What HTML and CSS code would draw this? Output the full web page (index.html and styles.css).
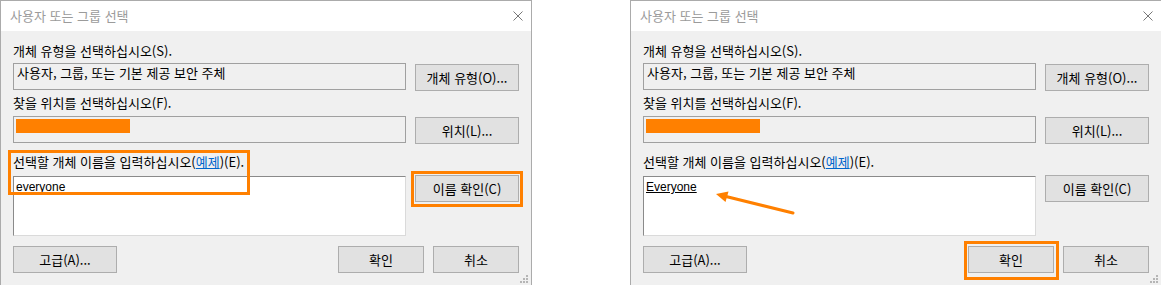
FILE: index.html
```html
<!DOCTYPE html>
<html lang="ko">
<head>
<meta charset="utf-8">
<title>사용자 또는 그룹 선택</title>
<link rel="stylesheet" href="styles.css">
</head>
<body>
<div class="stage">
  <section class="dlg">
    <header class="titlebar">
      <span class="title">사용자 또는 그룹 선택</span>
      <svg class="close" viewBox="0 0 10 10" width="10" height="10"><path d="M0.5 0.5L9.5 9.5M9.5 0.5L0.5 9.5" stroke="#777" stroke-width="1" fill="none"/></svg>
    </header>
    <div class="content">
      <div class="label l1">개체 유형을 선택하십시오(S).</div>
      <div class="row r1">
        <div class="field"><span class="ftext">사용자, 그룹, 또는 기본 제공 보안 주체</span></div>
        <div class="btn">개체 유형(O)...</div>
      </div>
      <div class="label l2">찾을 위치를 선택하십시오(F).</div>
      <div class="row r2">
        <div class="field"><div class="redact"></div></div>
        <div class="btn">위치(L)...</div>
      </div>
      <div class="label l3">선택할 개체 이름을 입력하십시오(<span class="link">예제</span>)(E).</div>
      <div class="row r3">
        <div class="listbox"><span class="typed">everyone</span></div>
        <div class="btn">이름 확인(C)</div>
      </div>
      <div class="row r4">
        <div class="btn">고급(A)...</div>
        <div class="spacer"></div>
        <div class="btn small">확인</div>
        <div class="btn small">취소</div>
      </div>
    </div>
    <svg class="grip" viewBox="0 0 8 8" width="8" height="8"><g fill="#b5b5b5"><rect x="6" y="0" width="2" height="2"/><rect x="3" y="3" width="2" height="2"/><rect x="6" y="3" width="2" height="2"/><rect x="0" y="6" width="2" height="2"/><rect x="3" y="6" width="2" height="2"/><rect x="6" y="6" width="2" height="2"/></g></svg>
    <div class="mark mark-entry"></div>
    <div class="mark mark-check"></div>
  </section>

  <section class="dlg">
    <header class="titlebar">
      <span class="title">사용자 또는 그룹 선택</span>
      <svg class="close" viewBox="0 0 10 10" width="10" height="10"><path d="M0.5 0.5L9.5 9.5M9.5 0.5L0.5 9.5" stroke="#777" stroke-width="1" fill="none"/></svg>
    </header>
    <div class="content">
      <div class="label l1">개체 유형을 선택하십시오(S).</div>
      <div class="row r1">
        <div class="field"><span class="ftext">사용자, 그룹, 또는 기본 제공 보안 주체</span></div>
        <div class="btn">개체 유형(O)...</div>
      </div>
      <div class="label l2">찾을 위치를 선택하십시오(F).</div>
      <div class="row r2">
        <div class="field"><div class="redact"></div></div>
        <div class="btn">위치(L)...</div>
      </div>
      <div class="label l3">선택할 개체 이름을 입력하십시오(<span class="link">예제</span>)(E).</div>
      <div class="row r3">
        <div class="listbox"><span class="typed resolved">Everyone</span></div>
        <div class="btn">이름 확인(C)</div>
      </div>
      <div class="row r4">
        <div class="btn">고급(A)...</div>
        <div class="spacer"></div>
        <div class="btn small">확인</div>
        <div class="btn small">취소</div>
      </div>
    </div>
    <svg class="grip" viewBox="0 0 8 8" width="8" height="8"><g fill="#b5b5b5"><rect x="6" y="0" width="2" height="2"/><rect x="3" y="3" width="2" height="2"/><rect x="6" y="3" width="2" height="2"/><rect x="0" y="6" width="2" height="2"/><rect x="3" y="6" width="2" height="2"/><rect x="6" y="6" width="2" height="2"/></g></svg>
    <svg class="arrow" viewBox="0 0 90 30" width="90" height="30"><line x1="87" y1="27" x2="20" y2="10.5" stroke="#ff8000" stroke-width="3" stroke-linecap="round"/><polygon points="10,8 22.5,5.5 19.5,16" fill="#ff8000"/></svg>
    <div class="mark mark-ok"></div>
  </section>
</div>
</body>
</html>
```

FILE: styles.css
```css
* { box-sizing: border-box; }

html, body {
  margin: 0;
  padding: 0;
  background: #ffffff;
}

body {
  font-family: "Noto Sans CJK KR", "Noto Sans", sans-serif;
  font-size: 13px;
  color: #000000;
}

.stage {
  display: flex;
  gap: 98px;
  width: 1161px;
  height: 285px;
  overflow: hidden;
}

.dlg {
  position: relative;
  flex: 0 0 532px;
  height: 285px;
  border: 1px solid #ababab;
  border-bottom: 0;
  background: #f0f0f0;
  display: flex;
  flex-direction: column;
}

.titlebar {
  height: 30px;
  background: #ffffff;
  display: flex;
  align-items: center;
  justify-content: space-between;
  padding: 0 8px 0 9px;
}

.title {
  color: #9b9b9b;
  line-height: 16px;
}

.close { display: block; }

.content {
  padding: 12px 12px 0 12px;
  display: flex;
  flex-direction: column;
}

.label {
  height: 16px;
  line-height: 16px;
  white-space: nowrap;
}

.l2 { margin-top: 4px; }
.l3 { margin-top: 10px; }

.row {
  display: flex;
  gap: 9px;
  align-items: flex-start;
}

.r1 { margin-top: 4px; }
.r2 { margin-top: 5px; }
.r3 { margin-top: 5px; }
.r4 { margin-top: 10px; gap: 0; }

.field {
  flex: 1;
  height: 27px;
  border: 1px solid #a0a0a0;
  background: #f0f0f0;
  padding: 0 3px;
  line-height: 16px;
  white-space: nowrap;
}

.ftext { display: block; padding-top: 1px; }

.redact {
  width: 114px;
  height: 14px;
  margin: 2px 0 0 -1px;
  background: #ff8000;
}

.btn {
  flex: 0 0 104px;
  height: 27px;
  margin-top: 1px;
  border: 1px solid #adadad;
  background: #e1e1e1;
  display: flex;
  align-items: center;
  justify-content: center;
  line-height: 16px;
  white-space: nowrap;
}

.r3 .btn { margin-top: 0; }
.r4 .btn { margin-top: 0; }

.btn.small { flex: 0 0 86px; }
.btn.small + .btn.small { margin-left: 9px; }

.spacer { flex: 1; }

.listbox {
  flex: 1;
  height: 60px;
  margin-top: 1px;
  background: #ffffff;
  border: 1px solid;
  border-color: #8a8a8a #dadada #dadada #8a8a8a;
  padding: 2px 2px;
  line-height: 16px;
}

.typed {
  display: block;
  font-family: "Liberation Sans", Arial, sans-serif;
  font-size: 12px;
}

.resolved { text-decoration: underline; }

.link {
  color: #0066cc;
  text-decoration: underline;
}

.grip {
  position: absolute;
  right: 3px;
  bottom: 2px;
}

.mark {
  position: absolute;
  border: 3px solid #ff8000;
}

.mark-entry { left: 7px; top: 149px; width: 242px; height: 45px; }
.mark-check { left: 410px; top: 170px; width: 112px; height: 36px; }
.mark-ok { left: 333px; top: 240px; width: 95px; height: 39px; }

.arrow {
  position: absolute;
  left: 75px;
  top: 185px;
}
```
